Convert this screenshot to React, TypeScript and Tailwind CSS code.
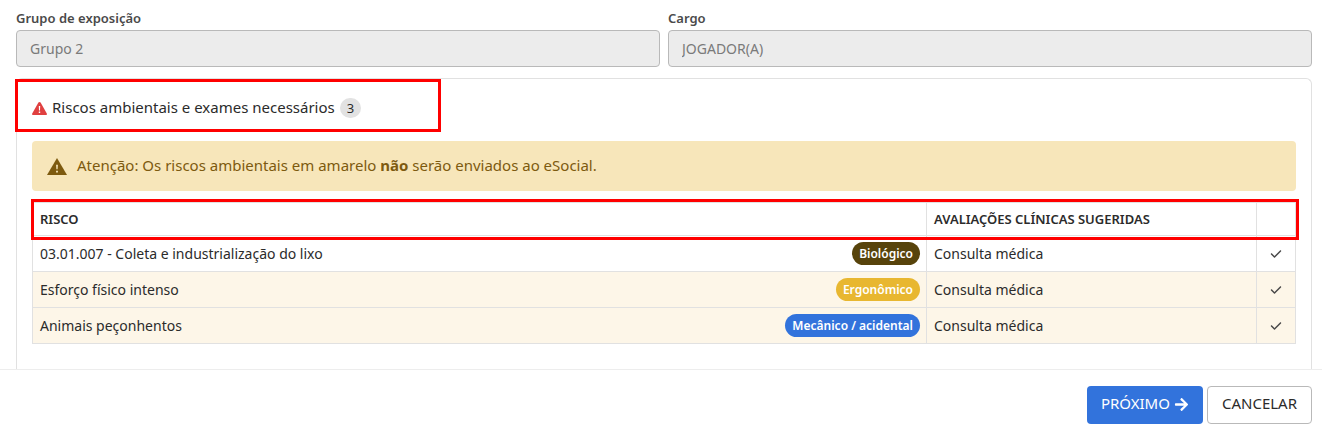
import { FaArrowRight } from "react-icons/fa";
import { FaCheck } from "react-icons/fa6";

const risks = [
  {
    name: "03.01.007 - Coleta e industrialização do lixo",
    type: "Biológico",
    badge: "bg-[#57430b]",
    row: "bg-white",
    exam: "Consulta médica",
  },
  {
    name: "Esforço físico intenso",
    type: "Ergonômico",
    badge: "bg-[#e8b730]",
    row: "bg-[#fdf6e8]",
    exam: "Consulta médica",
  },
  {
    name: "Animais peçonhentos",
    type: "Mecânico / acidental",
    badge: "bg-[#3273dc]",
    row: "bg-[#fdf6e8]",
    exam: "Consulta médica",
  },
];

function DangerIcon() {
  return (
    <svg viewBox="0 0 15 13" className="h-[13px] w-[15px] fill-[#e04040]" aria-hidden="true">
      <path d="M6.4.6Q7.5-.6 8.6.6L14.8 11.6Q15.2 13 13.8 13H1.2Q-.2 13 .2 11.6Z" />
      <path fill="#fff" d="M6.8 4h1.4l-.2 4.4H7ZM6.8 9.6h1.4V11H6.8Z" />
    </svg>
  );
}

function WarningIcon() {
  return (
    <svg viewBox="0 0 20 17" className="h-[17px] w-5 fill-current" aria-hidden="true">
      <path d="M10 0 20 17H0Z" />
      <path fill="#f7e6ba" d="M9.1 6.7h1.8l-.3 4.6H9.4ZM9.1 12.7h1.8v1.8H9.1Z" />
    </svg>
  );
}

function Field({ id, label, value }: { id: string; label: string; value: string }) {
  return (
    <div className="flex-1">
      <label htmlFor={id} className="block text-[13px] leading-5 font-semibold text-[#4a4a4a]">
        {label}
      </label>
      <input
        id={id}
        type="text"
        value={value}
        disabled
        className="mt-0.5 block h-[37px] w-full rounded border border-[#b9b9b9] bg-[#ececec] px-[13px] text-sm text-[#7a7a7a]"
      />
    </div>
  );
}

export default function App() {
  return (
    <div className="bg-white font-['Noto_Sans',sans-serif] text-sm text-[#2b2b2b]">
      <main className="pt-2 pr-2.5 pl-4">
        <div className="flex gap-2">
          <Field id="grupo" label="Grupo de exposição" value="Grupo 2" />
          <Field id="cargo" label="Cargo" value="JOGADOR(A)" />
        </div>

        <section className="relative mt-[11px] rounded-t-md border border-b-0 border-[#e1e1e1] px-[15px] pt-[18px] pb-[25px]">
          {/* Title */}
          <div className="pointer-events-none absolute -left-0.5 top-0 h-[53px] w-[426px] border-3 border-[#ff0000]" />
          <h2 className="flex h-[22px] items-center gap-[5px] text-[15px]">
            <DangerIcon />
            Riscos ambientais e exames necessários
            <span className="rounded-full bg-[#e2e2e2] px-[7px] text-[13px] leading-5">3</span>
          </h2>

          {/* Warning */}
          <div className="mt-[22px] flex h-[50px] items-center gap-2.5 rounded bg-[#f7e6ba] px-[15px] text-[15px] text-[#7d5a0f]">
            <WarningIcon />
            <p>
              Atenção: Os riscos ambientais em amarelo <strong>não</strong> serão enviados ao eSocial.
            </p>
          </div>

          {/* Risks table */}
          <div className="relative mt-[11px]">
            <div className="pointer-events-none absolute -top-[3px] -right-[3px] -left-px h-[41px] border-3 border-[#ff0000]" />
            <table className="w-full table-fixed border-collapse text-left">
              <colgroup>
                <col />
                <col className="w-[330px]" />
                <col className="w-[39px]" />
              </colgroup>
              <thead>
                <tr className="h-[33px] text-[13px]">
                  <th className="border border-[#e1e1e1] px-[7px] font-semibold">RISCO</th>
                  <th className="border border-[#e1e1e1] px-[7px] font-semibold">
                    AVALIAÇÕES CLÍNICAS SUGERIDAS
                  </th>
                  <th className="border border-[#e1e1e1]" />
                </tr>
              </thead>
              <tbody>
                {risks.map((risk) => (
                  <tr key={risk.name} className={`h-[36px] ${risk.row}`}>
                    <td className="border border-[#e1e1e1] pr-1.5 pl-[7px]">
                      <div className="flex items-center justify-between">
                        {risk.name}
                        <span
                          className={`rounded-full px-[7px] text-xs leading-[23px] font-semibold text-white ${risk.badge}`}
                        >
                          {risk.type}
                        </span>
                      </div>
                    </td>
                    <td className="border border-[#e1e1e1] px-[7px]">{risk.exam}</td>
                    <td className="border border-[#e1e1e1]">
                      <FaCheck className="mx-auto size-3 text-[#4a4a4a]" />
                    </td>
                  </tr>
                ))}
              </tbody>
            </table>
          </div>
        </section>
      </main>

      {/* Actions */}
      <footer className="flex justify-end gap-1 border-t border-[#ededed] pt-4 pr-2.5 pb-1">
        <button className="flex h-[38px] items-center gap-1 rounded bg-[#3273dc] px-3.5 pb-0.5 text-[15px] text-white">
          PRÓXIMO
          <FaArrowRight className="size-[15px]" />
        </button>
        <button className="h-[38px] rounded border border-[#b9b9b9] bg-white px-3.5 pb-0.5 text-[15px]">
          CANCELAR
        </button>
      </footer>
    </div>
  );
}
